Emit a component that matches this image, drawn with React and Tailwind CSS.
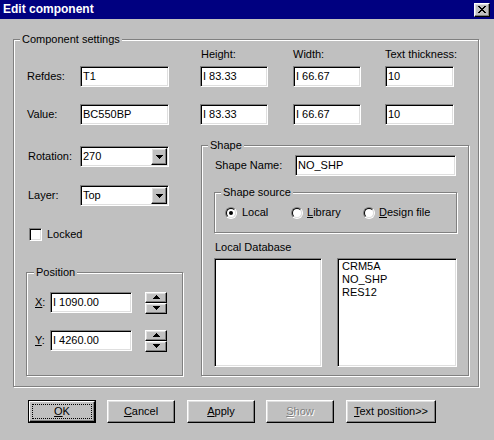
import React from "react";

const sunken =
  "border border-t-[#808080] border-l-[#808080] border-b-white border-r-white shadow-[inset_1px_1px_0_#000,inset_-1px_-1px_0_#dfdfdf]";
const raised =
  "border border-t-white border-l-white border-r-black border-b-black shadow-[inset_-1px_-1px_0_#808080,inset_1px_1px_0_#dfdfdf] bg-[#c0c0c0]";

function Down() {
  return (
    <svg width="7" height="4" shapeRendering="crispEdges">
      <rect x="0" y="0" width="7" height="1" />
      <rect x="1" y="1" width="5" height="1" />
      <rect x="2" y="2" width="3" height="1" />
      <rect x="3" y="3" width="1" height="1" />
    </svg>
  );
}

function Up() {
  return (
    <svg width="7" height="4" shapeRendering="crispEdges">
      <rect x="3" y="0" width="1" height="1" />
      <rect x="2" y="1" width="3" height="1" />
      <rect x="1" y="2" width="5" height="1" />
      <rect x="0" y="3" width="7" height="1" />
    </svg>
  );
}

function CloseX() {
  return (
    <svg width="8" height="7" shapeRendering="crispEdges">
      <rect x="0" y="0" width="2" height="1" />
      <rect x="6" y="0" width="2" height="1" />
      <rect x="1" y="1" width="2" height="1" />
      <rect x="5" y="1" width="2" height="1" />
      <rect x="2" y="2" width="4" height="1" />
      <rect x="3" y="3" width="2" height="1" />
      <rect x="2" y="4" width="4" height="1" />
      <rect x="1" y="5" width="2" height="1" />
      <rect x="5" y="5" width="2" height="1" />
      <rect x="0" y="6" width="2" height="1" />
      <rect x="6" y="6" width="2" height="1" />
    </svg>
  );
}

function Group({ label, className, labelCls, children }) {
  return (
    <div
      className={
        "relative border border-[#808080] shadow-[inset_1px_1px_0_#fff,1px_1px_0_#fff] " +
        className
      }
    >
      <span
        className={
          "absolute -top-[7px] px-[2px] bg-[#c0c0c0] leading-[13px] whitespace-nowrap " +
          labelCls
        }
      >
        {label}
      </span>
      {children}
    </div>
  );
}

function Input({ value, className }) {
  return (
    <div
      className={
        "h-[21px] bg-white pl-[2px] flex items-center whitespace-nowrap overflow-hidden " +
        sunken +
        " " +
        className
      }
    >
      {value}
    </div>
  );
}

function Combo({ value }) {
  return (
    <div
      className={
        "w-[89px] h-[21px] bg-white pl-[2px] pr-[1px] flex items-center " +
        sunken
      }
    >
      <span className="flex-1">{value}</span>
      <div
        className={
          "w-[16px] h-[17px] flex items-center justify-center " + raised
        }
      >
        <Down />
      </div>
    </div>
  );
}

function Spinner() {
  return (
    <div className="flex flex-col ml-[13px]">
      <div
        className={"w-[22px] h-[11px] flex items-center justify-center " + raised}
      >
        <Up />
      </div>
      <div
        className={"w-[22px] h-[11px] flex items-center justify-center " + raised}
      >
        <Down />
      </div>
    </div>
  );
}

function Radio({ checked }) {
  return (
    <div className="w-[12px] h-[12px] rounded-full border border-t-[#808080] border-l-[#808080] border-r-white border-b-white">
      <div className="w-full h-full rounded-full bg-white border border-t-black border-l-black border-r-[#dfdfdf] border-b-[#dfdfdf] flex items-center justify-center">
        {checked && <div className="w-[4px] h-[4px] rounded-full bg-black" />}
      </div>
    </div>
  );
}

function Button({ children, className, disabled }) {
  return (
    <div
      className={
        "h-[23px] flex items-center justify-center " +
        raised +
        " " +
        (disabled ? "text-[#808080] [text-shadow:1px_1px_0_#fff] " : "") +
        className
      }
    >
      <span>{children}</span>
    </div>
  );
}

export default function App() {
  return (
    <div className="w-[494px] h-[440px] bg-[#c0c0c0] overflow-hidden font-['Liberation_Sans',Arial,sans-serif] text-[11px] leading-[13px] text-black select-none">
      {/* Title bar */}
      <div className="h-[19px] bg-[#000080] flex items-center justify-between pl-[3px] pr-[4px]">
        <span className="text-white font-bold text-[12px] leading-[15px]">
          Edit component
        </span>
        <div
          className={
            "w-[16px] h-[14px] flex items-center justify-center " + raised
          }
        >
          <CloseX />
        </div>
      </div>

      {/* Component settings */}
      <Group
        label="Component settings"
        className="ml-[13px] mt-[20px] w-[466px] h-[348px]"
        labelCls="left-[6px]"
      >
        <div className="pl-[14px]">
          <div className="mt-[8px] flex h-[13px]">
            <div className="w-[173px]" />
            <span className="w-[92px]">Height:</span>
            <span className="w-[92px]">Width:</span>
            <span>Text thickness:</span>
          </div>
          <div className="mt-[5px] flex items-center h-[21px]">
            <span className="w-[52px] -ml-[1px] pl-[0px]">Refdes:</span>
            <Input value="T1" className="w-[89px] ml-[1px]" />
            <Input value="I 83.33" className="w-[68px] ml-[31px]" />
            <Input value="I 66.67" className="w-[68px] ml-[25px]" />
            <Input value="10" className="w-[69px] ml-[24px]" />
          </div>
          <div className="mt-[17px] flex items-center h-[21px]">
            <span className="w-[52px] -ml-[1px]">Value:</span>
            <Input value="BC550BP" className="w-[89px] ml-[1px]" />
            <Input value="I 83.33" className="w-[68px] ml-[31px]" />
            <Input value="I 66.67" className="w-[68px] ml-[25px]" />
            <Input value="10" className="w-[69px] ml-[24px]" />
          </div>
        </div>

        <div className="mt-[20px] flex pl-[12px]">
          {/* Left column */}
          <div className="w-[175px] flex flex-col">
            <div className="mt-[1px] pl-[2px] flex items-center h-[21px]">
              <span className="w-[52px]">Rotation:</span>
              <Combo value="270" />
            </div>
            <div className="mt-[18px] pl-[2px] flex items-center h-[21px]">
              <span className="w-[52px]">Layer:</span>
              <Combo value="Top" />
            </div>
            <div className="mt-[22px] pl-[3px] flex items-center h-[13px]">
              <div className={"w-[13px] h-[13px] bg-white " + sunken} />
              <span className="ml-[5px]">Locked</span>
            </div>
            <Group
              label="Position"
              className="mt-[31px] w-[157px] h-[104px]"
              labelCls="left-[7px]"
            >
              <div className="mt-[18px] flex items-center h-[23px] pl-[8px]">
                <span className="w-[15px]">
                  <u>X</u>:
                </span>
                <Input value="I 1090.00" className="w-[82px]" />
                <Spinner />
              </div>
              <div className="mt-[15px] flex items-center h-[23px] pl-[8px]">
                <span className="w-[15px]">
                  <u>Y</u>:
                </span>
                <Input value="I 4260.00" className="w-[82px]" />
                <Spinner />
              </div>
            </Group>
          </div>

          {/* Shape */}
          <Group
            label="Shape"
            className="w-[268px] h-[231px]"
            labelCls="left-[6px]"
          >
            <div className="mt-[9px] flex items-center h-[21px] pl-[13px]">
              <span className="w-[80px]">Shape Name:</span>
              <Input value="NO_SHP" className="w-[161px]" />
            </div>
            <Group
              label="Shape source"
              className="mt-[16px] ml-[12px] w-[243px] h-[41px]"
              labelCls="left-[6px]"
            >
              <div className="mt-[13px] flex items-center h-[13px] pl-[10px]">
                <div className="w-[66px] flex items-center">
                  <Radio checked />
                  <span className="ml-[5px]">Local</span>
                </div>
                <div className="w-[72px] flex items-center">
                  <Radio />
                  <span className="ml-[4px]">
                    <u>L</u>ibrary
                  </span>
                </div>
                <div className="flex items-center">
                  <Radio />
                  <span className="ml-[4px]">
                    <u>D</u>esign file
                  </span>
                </div>
              </div>
            </Group>
            <div className="mt-[8px] h-[13px] pl-[13px]">Local Database</div>
            <div className="mt-[4px] flex pl-[12px]">
              <div className={"w-[108px] h-[109px] bg-white " + sunken} />
              <div
                className={
                  "ml-[15px] w-[120px] h-[109px] bg-white pl-[4px] pt-[1px] flex flex-col " +
                  sunken
                }
              >
                <span>CRM5A</span>
                <span>NO_SHP</span>
                <span>RES12</span>
              </div>
            </div>
          </Group>
        </div>
      </Group>

      {/* Buttons */}
      <div className="mt-[13px] flex pl-[28px]">
        <div className="w-[68px] h-[23px] border border-black">
          <div
            className={
              "w-full h-full p-[2px] flex border border-t-white border-l-white border-r-black border-b-black shadow-[inset_-1px_-1px_0_#808080]"
            }
          >
            <div className="flex-1 border border-dotted border-black flex items-center justify-center">
              <span>
                <u>O</u>K
              </span>
            </div>
          </div>
        </div>
        <Button className="w-[68px] ml-[11px]">
          <u>C</u>ancel
        </Button>
        <Button className="w-[68px] ml-[12px]">
          <u>A</u>pply
        </Button>
        <Button className="w-[68px] ml-[11px]" disabled>
          <u>S</u>how
        </Button>
        <Button className="w-[90px] ml-[12px]">
          <u>T</u>ext position&gt;&gt;
        </Button>
      </div>
    </div>
  );
}
